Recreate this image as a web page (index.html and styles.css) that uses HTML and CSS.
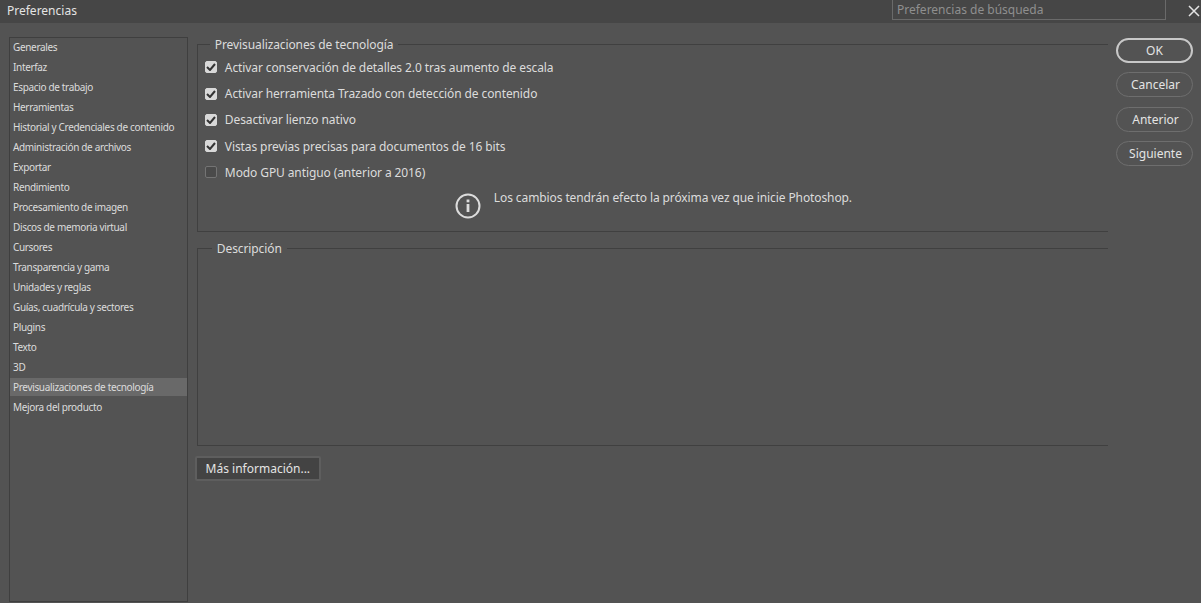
FILE: index.html
```html
<!DOCTYPE html>
<html>
<head>
  <title>Preferencias</title>
  <meta charset="UTF-8">
  <link rel="stylesheet" href="styles.css">
</head>
<body>
  <div class="title-bar">
    <span class="title-text">Preferencias</span>
    <input class="search-input" type="text" placeholder="Preferencias de búsqueda">
    <svg class="close-icon" width="12" height="12" viewBox="0 0 12 12"><path d="M1 1L11 11M11 1L1 11" stroke="#e4e4e4" stroke-width="1.5" fill="none"/></svg>
  </div>
  <div class="dialog-body">
    <ul class="side-list">
      <li>Generales</li>
      <li>Interfaz</li>
      <li>Espacio de trabajo</li>
      <li>Herramientas</li>
      <li>Historial y Credenciales de contenido</li>
      <li>Administración de archivos</li>
      <li>Exportar</li>
      <li>Rendimiento</li>
      <li>Procesamiento de imagen</li>
      <li>Discos de memoria virtual</li>
      <li>Cursores</li>
      <li>Transparencia y gama</li>
      <li>Unidades y reglas</li>
      <li>Guías, cuadrícula y sectores</li>
      <li>Plugins</li>
      <li>Texto</li>
      <li>3D</li>
      <li class="selected">Previsualizaciones de tecnología</li>
      <li>Mejora del producto</li>
    </ul>
    <div class="main-panel">
      <fieldset class="group tech-group">
        <legend>Previsualizaciones de tecnología</legend>
        <label class="check-row"><span class="check-box checked"><svg width="10" height="8" viewBox="0 0 10 8"><path d="M1 4L4 7L9 1" stroke="#333" stroke-width="2" fill="none"/></svg></span>Activar conservación de detalles 2.0 tras aumento de escala</label>
        <label class="check-row"><span class="check-box checked"><svg width="10" height="8" viewBox="0 0 10 8"><path d="M1 4L4 7L9 1" stroke="#333" stroke-width="2" fill="none"/></svg></span>Activar herramienta Trazado con detección de contenido</label>
        <label class="check-row"><span class="check-box checked"><svg width="10" height="8" viewBox="0 0 10 8"><path d="M1 4L4 7L9 1" stroke="#333" stroke-width="2" fill="none"/></svg></span>Desactivar lienzo nativo</label>
        <label class="check-row"><span class="check-box checked"><svg width="10" height="8" viewBox="0 0 10 8"><path d="M1 4L4 7L9 1" stroke="#333" stroke-width="2" fill="none"/></svg></span>Vistas previas precisas para documentos de 16 bits</label>
        <label class="check-row"><span class="check-box"></span>Modo GPU antiguo (anterior a 2016)</label>
        <div class="notice">
          <svg width="26" height="26" viewBox="0 0 26 26"><circle cx="13" cy="13" r="11.5" stroke="#dcdcdc" stroke-width="2" fill="none"/><rect x="11.6" y="11" width="2.8" height="8" fill="#dcdcdc"/><rect x="11.6" y="6.5" width="2.8" height="2.8" fill="#dcdcdc"/></svg>
          <span>Los cambios tendrán efecto la próxima vez que inicie Photoshop.</span>
        </div>
      </fieldset>
      <fieldset class="group desc-group">
        <legend>Descripción</legend>
      </fieldset>
      <button class="info-button">Más información...</button>
    </div>
    <div class="action-buttons">
      <button class="pill-button default-button">OK</button>
      <button class="pill-button">Cancelar</button>
      <button class="pill-button">Anterior</button>
      <button class="pill-button">Siguiente</button>
    </div>
  </div>
</body>
</html>
```

FILE: styles.css
```css
body {
  margin: 0;
  height: 603px;
  overflow: hidden;
  font-family: "Noto Sans", sans-serif;
  background-color: #535353;
  color: #dcdcdc;
}
.title-bar {
  box-sizing: border-box;
  display: flex;
  align-items: center;
  height: 23px;
  background-color: #464646;
  padding: 0 0 2px 7px;
  font-size: 12px;
}
.title-text {
  flex: 1;
  color: #e4e4e4;
}
.search-input {
  box-sizing: border-box;
  width: 274px;
  height: 20px;
  margin: -1px 22px 0 0;
  padding: 0 4px;
  border: 1px solid #6a6a6a;
  border-top: none;
  background-color: #464646;
  font-family: inherit;
  font-size: 12px;
}
.search-input::placeholder {
  color: #8f8f8f;
}
.close-icon {
  margin-right: 1px;
}
.dialog-body {
  display: flex;
  align-items: flex-start;
  padding: 14px 8px 0 9px;
}
.side-list {
  box-sizing: border-box;
  width: 179px;
  height: 565px;
  margin: 0;
  padding: 0;
  list-style: none;
  border: 1px solid #3f3f3f;
  font-size: 10px;
  letter-spacing: -0.34px;
}
.side-list li {
  height: 18px;
  line-height: 18px;
  margin-bottom: 2px;
  padding-left: 3px;
  white-space: nowrap;
}
.side-list li.selected {
  background-color: #696969;
}
.main-panel {
  width: 912px;
  margin: -1px 0 0 9px;
}
.group {
  box-sizing: border-box;
  margin: 0;
  padding: 0;
  border: 1px solid #404040;
  border-right: none;
  font-size: 12px;
  letter-spacing: -0.1px;
}
.group legend {
  margin-left: 12px;
  padding: 2px 5px 0;
  line-height: 14px;
}
.tech-group {
  height: 196px;
  padding: 7.4px 0 0 7px;
}
.tech-group legend {
  margin-left: 5px;
}
.desc-group {
  height: 206px;
  margin-top: 8px;
}
.desc-group legend {
  margin-left: 14px;
}
.check-row {
  display: flex;
  align-items: center;
  height: 16px;
  margin-bottom: 10.25px;
}
.check-box {
  box-sizing: border-box;
  display: flex;
  align-items: center;
  justify-content: center;
  width: 12px;
  height: 12px;
  margin-right: 8px;
  border: 1px solid #747474;
  border-radius: 2px;
  background-color: #4a4a4a;
}
.check-box.checked {
  background-color: #d8d8d8;
  border-color: #d8d8d8;
}
.notice {
  display: flex;
  align-items: flex-start;
  gap: 13px;
  margin: 0 0 0 250px;
  line-height: 14px;
}
.notice svg {
  margin-top: 2px;
}
.info-button {
  display: block;
  box-sizing: border-box;
  width: 126px;
  height: 25px;
  margin: 10px 0 0 -2px;
  padding: 0;
  border: 2px solid #5e5e5e;
  border-radius: 2px;
  background-color: #434343;
  color: #e4e4e4;
  font-family: inherit;
  font-size: 12px;
  white-space: nowrap;
}
.action-buttons {
  display: flex;
  flex-direction: column;
  gap: 9.5px;
  margin: 0.5px 0 0 8px;
}
.pill-button {
  box-sizing: border-box;
  width: 77px;
  height: 25px;
  padding: 0 0 0 2px;
  border: 1px solid #6e6e6e;
  border-radius: 13px;
  background-color: #535353;
  color: #e4e4e4;
  font-family: inherit;
  font-size: 12px;
}
.default-button {
  padding: 0;
  border: 2px solid #c8c8c8;
}
```
